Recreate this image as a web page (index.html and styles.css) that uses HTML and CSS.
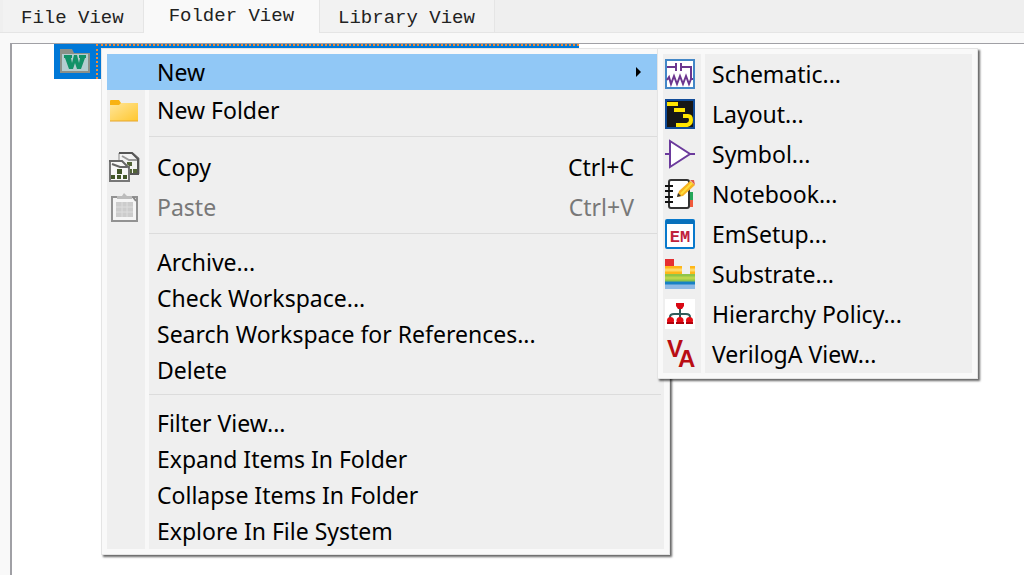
FILE: index.html
```html
<!DOCTYPE html>
<html lang="en">
<head>
  <meta charset="UTF-8">
  <title>Folder View</title>
  <link rel="stylesheet" href="styles.css">
</head>

<body>
  <div class="tabs" role="tablist">
    <button class="tab" role="tab">File View</button>
    <button class="tab active" role="tab" aria-selected="true">Folder View</button>
    <button class="tab" role="tab">Library View</button>
  </div>

  <main class="pane">
    <div class="tree">
      <div class="tree-item">
        <svg class="tree-icon" viewBox="0 0 32 26">
          <path d="M1 1h12l2 4h16v20H1z" fill="#8c9088"/>
          <path d="M3 6h26v17H3z" fill="#b4cdd0"/>
          <path d="M5 7h8v3h-1l1 5 2-8h3l2 8 1-5h-1V7h7v3h-1l-4 11h-4l-2-6-2 6h-4L6 10H5z" fill="#129268"/>
        </svg>
        <span class="tree-label"></span>
      </div>
    </div>
  </main>

  <!-- Context menu -->
  <div class="menu context-menu" role="menu">
    <button class="item selected" role="menuitem"><span class="icon"></span><span class="label">New</span>
      <svg class="arrow" viewBox="0 0 5 10"><path d="M0 0l5 5-5 5z"/></svg>
    </button>
    <button class="item tall" role="menuitem">
      <span class="icon"><svg viewBox="0 0 30 30">
        <defs><linearGradient id="folder" x2="1" y2="1"><stop stop-color="#ffe69b"/><stop offset="1" stop-color="#ffc72f"/></linearGradient></defs>
        <path d="M1 6q0-1 1-1h8l2 3h17v5H1z" fill="#f8b313"/>
        <path d="M1 10h9l2-2h17v18H1z" fill="url(#folder)"/>
        <path d="M1 26h28" stroke="#e7a62c"/>
      </svg></span><span class="label">New Folder</span>
    </button>
    <hr>
    <button class="item tall" role="menuitem">
      <span class="icon"><svg viewBox="0 0 30 30">
        <path d="M10 1h14l6 5v16H10z" fill="#f3f3f3" stroke="#888"/>
        <path d="M10 1h13l6 6v15H18" fill="none" stroke="#555" stroke-width="2"/>
        <path d="M13 4l7 4h8" fill="none" stroke="#999" stroke-width="2"/>
        <path d="M18 10h5v4h-5zM19 17h4v4h-4zM24 17h4v4h-4z" fill="#536438"/>
        <path d="M0 8h13l7 6v16H0z" fill="#f7f7f7"/>
        <path d="M1 30V8M0 29h20V14" fill="none" stroke="#777" stroke-width="2"/>
        <path d="M0 9h13l7 7M3 12l8 3h7" fill="none" stroke="#666" stroke-width="2"/>
        <path d="M8 17h5v5H8zM2 23h4v4H2zM8 23h4v4H8zM14 23h4v4h-4z" fill="#425729"/>
      </svg></span><span class="label">Copy</span><kbd>Ctrl+C</kbd>
    </button>
    <button class="item tall" role="menuitem" disabled>
      <span class="icon"><svg viewBox="0 0 30 30">
        <path d="M3 5h25v24H3z" fill="#f5f5f5" stroke="#929292" stroke-width="2"/>
        <path d="M8 7V4h5l2-3 3 3h5v3z" fill="#bcbcbc"/>
        <path d="M7 10h17v15H7z" fill="#ccc"/>
        <path d="M7 15h17M7 20h17M13 10v15M18 10v15" stroke="#ddd"/>
        <path d="M24 5l3 4" stroke="#888" stroke-width="2"/>
      </svg></span><span class="label">Paste</span><kbd>Ctrl+V</kbd>
    </button>
    <hr>
    <button class="item" role="menuitem"><span class="icon"></span><span class="label">Archive...</span></button>
    <button class="item" role="menuitem"><span class="icon"></span><span class="label">Check Workspace...</span></button>
    <button class="item" role="menuitem"><span class="icon"></span><span class="label">Search Workspace for References...</span></button>
    <button class="item" role="menuitem"><span class="icon"></span><span class="label">Delete</span></button>
    <hr>
    <button class="item" role="menuitem"><span class="icon"></span><span class="label">Filter View...</span></button>
    <button class="item" role="menuitem"><span class="icon"></span><span class="label">Expand Items In Folder</span></button>
    <button class="item" role="menuitem"><span class="icon"></span><span class="label">Collapse Items In Folder</span></button>
    <button class="item" role="menuitem"><span class="icon"></span><span class="label">Explore In File System</span></button>
  </div>

  <!-- New submenu -->
  <div class="menu submenu" role="menu">
    <button class="item tall" role="menuitem">
      <span class="icon"><svg viewBox="0 0 30 30">
        <path d="M1 1h28v28H1z" fill="#fff" stroke="#4387c7" stroke-width="2"/>
        <path d="M2 8h9M11 4v8M16 4v8M16 8h10v12h2M2 21l2-3 2 7 3-8 3 8 3-8 3 8 3-8 3 8 2-5" fill="none" stroke="#6c368f" stroke-width="2"/>
      </svg></span><span class="label">Schematic...</span>
    </button>
    <button class="item tall" role="menuitem">
      <span class="icon"><svg viewBox="0 0 30 30">
        <path d="M1 1h28v28H1z" fill="#171717" stroke="#104b98" stroke-width="2"/>
        <path d="M2 5h11M9 11h11" stroke="#ffe500" stroke-width="4"/>
        <path d="M18 17h5q3 0 3 4t-4 5H11" fill="none" stroke="#ffe500" stroke-width="4"/>
      </svg></span><span class="label">Layout...</span>
    </button>
    <button class="item tall" role="menuitem">
      <span class="icon"><svg viewBox="0 0 30 30">
        <path d="M5 2v26l20-13z" fill="#fff" stroke="#6b3a9c" stroke-width="2"/>
        <path d="M0 15h5M25 15h5" stroke="#6b3a9c" stroke-width="2"/>
      </svg></span><span class="label">Symbol...</span>
    </button>
    <button class="item tall" role="menuitem">
      <span class="icon"><svg viewBox="0 0 30 30">
        <path d="M23 13h5v8h-5z" fill="#24a65a"/><path d="M23 21h5v7h-5z" fill="#ef5a3c"/>
        <rect x="4" y="1" width="20" height="28" rx="2" fill="#fff" stroke="#333" stroke-width="2"/>
        <path d="M0 7h8M0 12h8M0 18h8M0 23h8" stroke="#111" stroke-width="2"/>
        <path d="M12 18l2-6L25 2l5 4-12 11z" fill="#f8b322"/><path d="M16 15L27 4" stroke="#ffdf3b" stroke-width="2"/>
        <path d="M25 1h4l1 5z" fill="#df5947"/><path d="M12 18l1-4 3 3z" fill="#333"/>
      </svg></span><span class="label">Notebook...</span>
    </button>
    <button class="item tall" role="menuitem">
      <span class="icon"><svg viewBox="0 0 30 30">
        <rect x="1" y="1" width="28" height="28" rx="1" fill="#fff" stroke="#0879cc" stroke-width="2"/>
        <path d="M1 1h28v4H1z" fill="#0870bb"/>
        <text class="em" x="15" y="23" text-anchor="middle">EM</text>
      </svg></span><span class="label">EmSetup...</span>
    </button>
    <button class="item tall" role="menuitem">
      <span class="icon"><svg viewBox="0 0 30 30">
        <path d="M0 0h9v8H0z" fill="#e52f32"/>
        <path d="M0 7h17v8h8V7h5v9H0z" fill="#ffb719"/><path d="M0 11h17M25 11h5" stroke="#ffd968" stroke-width="3"/>
        <path d="M0 15h30v8H0z" fill="#8fc549"/><path d="M0 19h30" stroke="#bcd64c" stroke-width="3"/>
        <path d="M0 23h30v7H0z" fill="#8db9e6"/><path d="M0 24h30" stroke="#1681c5" stroke-width="3"/>
      </svg></span><span class="label">Substrate...</span>
    </button>
    <button class="item tall" role="menuitem">
      <span class="icon"><svg viewBox="0 0 30 30">
        <path d="M0 0h30v30H0z" fill="#fff"/>
        <path d="M15 8v12M5 21v-3q0-3 4-3h12q4 0 4 3v3" fill="none" stroke="#315b59" stroke-width="2"/>
        <path d="M11 4h8v3l-2 3h-4l-2-3z" fill="#d90814"/>
        <g fill="#e40a12"><circle cx="5.500" cy="21.500" r="3.500"/><circle cx="15" cy="21.500" r="3.500"/><circle cx="24.500" cy="21.500" r="3.500"/></g>
        <path d="M2 24h7M11 24h8M21 24h7" stroke="#b2000b" stroke-width="2"/>
      </svg></span><span class="label">Hierarchy Policy...</span>
    </button>
    <button class="item tall" role="menuitem">
      <span class="icon"><svg viewBox="0 0 30 30">
        <text class="va" x="2" y="18">V</text><text class="va" x="13" y="28">A</text>
      </svg></span><span class="label">VerilogA View...</span>
    </button>
  </div>
</body>
</html>
```

FILE: styles.css
```css
* {
  box-sizing: border-box;
}
body {
  margin: 0;
  min-height: 100vh;
  display: flex;
  flex-direction: column;
  background: #f9f9f9;
  overflow: hidden;
}
button {
  border: none;
  font: inherit;
  color: inherit;
}
.tabs {
  display: flex;
  height: 33px;
  padding-left: 3px;
  background: #efefef;
  border-bottom: 1px solid #e5e5e5;
  font: 19px/24px "Liberation Mono", monospace;
  color: #222;
}
.tab {
  padding: 6px 19px 2px 18px;
  background: #f2f2f2;
  border-right: 1px solid #e5e5e5;
}
.tab.active {
  height: 33px;
  padding: 4px 25px 5px;
  background: #f9f9f9;
}
.pane {
  flex: 1;
  display: flex;
  padding: 10px 0 0 10px;
}
.tree {
  flex: 1;
  padding-left: 42px;
  background: #fff;
  border-top: 1px solid #a0a0a5;
  border-left: 2px solid #a0a0a5;
}
.tree-item {
  display: flex;
  width: 525px;
  height: 35px;
  background: #0078d7;
}
.tree-icon {
  width: 32px;
  height: 26px;
  margin: 4px 5px;
}
.tree-label {
  flex: 1;
  border: 2px dotted #f08a35;
}

.menu {
  position: absolute;
  display: flex;
  flex-direction: column;
  padding: 5px;
  border: 1px solid #e4e4e4;
  background: #efefef;
  box-shadow: inset 0 0 0 5px #f9f9f9, 2px 2px 2px rgba(0, 0, 0, 0.6);
  font: 23px/36px "Noto Sans", "Open Sans", sans-serif;
  color: #000;
}
.context-menu {
  top: 48px;
  left: 101px;
  width: 569px;
}
.submenu {
  top: 48px;
  left: 657px;
  width: 321px;
  padding-bottom: 4px;
}
.item {
  display: flex;
  align-items: center;
  height: 36px;
  padding: 0;
  background: linear-gradient(to right, transparent 38px, #f8f8f8 38px, #f8f8f8 42px, transparent 42px);
  text-align: left;
}
.item.tall {
  height: 40px;
}
.item.selected {
  background: #91c8f6;
}
.item:disabled {
  color: #787878;
}
.icon {
  width: 30px;
  height: 30px;
  margin: 0 18px 0 2px;
}
.submenu .icon {
  margin-right: 17px;
}
.icon svg {
  display: block;
  overflow: visible;
}
.label {
  flex: 1;
}
.arrow {
  width: 5px;
  height: 10px;
  margin-right: 23px;
}
kbd {
  margin-right: 30px;
  font: inherit;
}
.menu hr {
  width: 100%;
  height: 17px;
  margin: 0;
  border: none;
  background:
    linear-gradient(#dcdcdc, #dcdcdc) 42px 6px / calc(100% - 45px) 1px no-repeat,
    linear-gradient(#f8f8f8, #f8f8f8) 38px 0 / 4px 100% no-repeat;
}
.em {
  font: bold 17px "Liberation Mono", monospace;
  fill: #bf233c;
}
.va {
  font: bold 24px "Liberation Sans", sans-serif;
  fill: #b90d14;
}
```
